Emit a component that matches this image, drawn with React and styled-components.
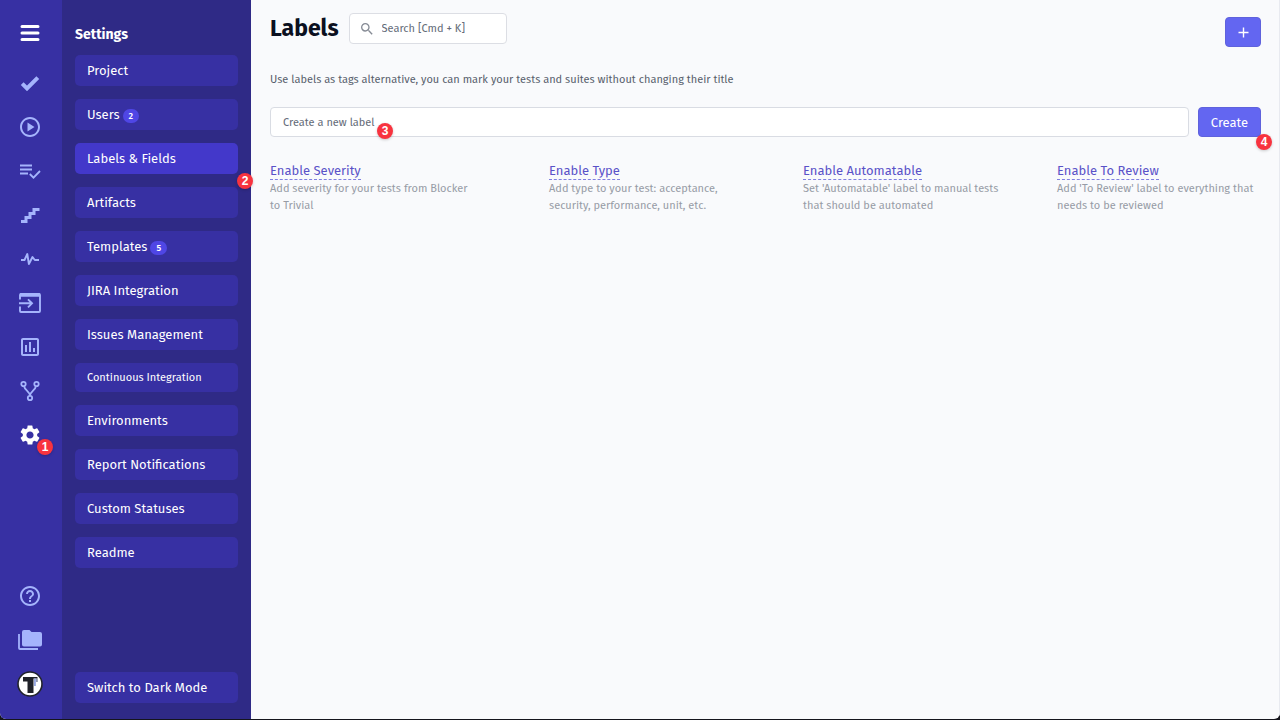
import styled, { createGlobalStyle } from "styled-components"
import {
  MdOutlinePlayCircle,
  MdHelpOutline,
  MdSettings,
  MdOutlineAssessment,
  MdSearch,
} from "react-icons/md"

const GlobalStyle = createGlobalStyle`
    * {
        box-sizing: border-box;
    }
    body {
        margin: 0;
        background-color: #15151c;
        font-family: "Fira Sans", "Noto Sans", sans-serif;
        font-size: 13px;
        color: #111827;
    }
    button, input {
        font-family: inherit;
    }
`

const Page = styled.div`
    display: flex;
    height: calc(100vh - 1px);
    overflow: hidden;
    border-radius: 0 0 6px 6px;
    background-color: #f9fafc;
`
const Rail = styled.nav`
    display: flex;
    flex-direction: column;
    align-items: center;
    width: 62px;
    flex-shrink: 0;
    padding: 18px 2px 20px 0;
    background-color: #3730a3;
`
const RailLink = styled.a`
    position: relative;
    display: flex;
    align-items: center;
    justify-content: center;
    width: 30px;
    height: 30px;
    margin-bottom: ${props => (props.$last ? "0" : "14px")};
    color: ${props => (props.$active ? "white" : "#a5b4fc")};
`
const MenuButton = styled.button`
    display: flex;
    align-items: center;
    justify-content: center;
    width: 30px;
    height: 30px;
    margin-bottom: 20px;
    padding: 0;
    border: none;
    background: none;
    color: white;
    cursor: pointer;
`
const RailBottom = styled.div`
    margin-top: auto;
`

const Side = styled.aside`
    position: relative;
    display: flex;
    flex-direction: column;
    width: 189px;
    flex-shrink: 0;
    padding: 25px 13px 16px;
    background-color: #2f2a86;
`
const SideTitle = styled.h2`
    margin: 0 0 10px;
    font-size: 14px;
    line-height: 20px;
    font-weight: 700;
    color: white;
`
const SideList = styled.div`
    display: flex;
    flex-direction: column;
    gap: 13px;
`
const SideLink = styled.a`
    display: flex;
    align-items: center;
    gap: 3px;
    height: ${props => (props.$small ? "29px" : "31px")};
    padding: 0 12px;
    border-radius: 5px;
    background-color: ${props => (props.$active ? "#4338ca" : "#3730a3")};
    font-size: ${props => (props.$small ? "11px" : "13px")};
    color: white;
    text-decoration: none;
    white-space: nowrap;
`
const Count = styled.span`
    padding: 0 6px;
    border-radius: 7px;
    background-color: #4f46e5;
    font-size: 9px;
    line-height: 14px;
    font-weight: 500;
    margin-top: 2px;
`
const ThemeButton = styled.button`
    height: 31px;
    margin-top: auto;
    padding: 0 12px;
    border: none;
    border-radius: 5px;
    background-color: #3730a3;
    font-size: 13px;
    text-align: left;
    color: white;
    cursor: pointer;
`

const Main = styled.main`
    flex: 1;
    min-width: 0;
    padding: 13px 18px 0 19px;
    border-right: 1px solid #e8eaf0;
`
const Header = styled.header`
    display: flex;
    align-items: flex-start;
`
const Heading = styled.h1`
    margin: 0 10px 0 0;
    font-size: 23px;
    line-height: 31px;
    font-weight: 700;
    color: #0b1020;
`
const SearchBox = styled.label`
    display: flex;
    align-items: center;
    gap: 7px;
    width: 158px;
    height: 31px;
    padding: 0 9px;
    border: 1px solid #dcdee4;
    border-radius: 4px;
    background-color: white;
    color: #868b95;
`
const SearchInput = styled.input`
    min-width: 0;
    flex: 1;
    padding: 0;
    border: none;
    outline: none;
    background: none;
    font-size: 11px;
    &::placeholder {
        color: #646b78;
        opacity: 1;
    }
`
const PrimaryButton = styled.button`
    position: relative;
    display: flex;
    align-items: center;
    justify-content: center;
    width: ${props => (props.$square ? "36px" : "63px")};
    height: 30px;
    flex-shrink: 0;
    padding: 0;
    border: 1px solid #5f62dc;
    border-radius: 4px;
    background-color: #6366f1;
    font-size: 13px;
    color: white;
    cursor: pointer;
`
const AddSlot = styled.div`
    margin: 4px 0 0 auto;
`
const Intro = styled.p`
    margin: 24px 0 19px;
    font-size: 11px;
    line-height: 17px;
    color: #585f6c;
`
const CreateForm = styled.form`
    display: flex;
    gap: 9px;
`
const Field = styled.div`
    position: relative;
    flex: 1;
`
const LabelInput = styled.input`
    display: block;
    width: 100%;
    height: 30px;
    padding: 0 12px;
    border: 1px solid #d9dce3;
    border-radius: 4px;
    background-color: white;
    font-size: 11px;
    outline: none;
    &::placeholder {
        color: #646b78;
        opacity: 1;
    }
`
const Presets = styled.div`
    display: grid;
    grid-template-columns: 279fr 254fr 254fr 204fr;
    margin-top: 26px;
`
const PresetLink = styled.a`
    display: inline-block;
    border-bottom: 1px dashed #7f7fe0;
    font-size: 13px;
    line-height: 16px;
    color: #5a52c8;
    text-decoration: none;
`
const PresetText = styled.p`
    max-width: 204px;
    margin: 0;
    font-size: 11px;
    line-height: 17px;
    color: #979ca6;
`

// numbered step marker, pinned over its parent
const Marker = styled.span`
    position: absolute;
    left: ${props => props.$left};
    top: ${props => props.$top};
    z-index: 1;
    width: 16px;
    height: 16px;
    border-radius: 50%;
    background-color: #f8333f;
    box-shadow: 0 1px 3px rgba(0, 0, 0, 0.2);
    font-family: "Liberation Sans", sans-serif;
    font-size: 12px;
    line-height: 16px;
    font-weight: 700;
    text-align: center;
    color: white;
`

const MenuIcon = () => (
  <svg width="20" height="18" viewBox="0 0 20 18" stroke="currentColor" strokeWidth="3" strokeLinecap="round">
    <path d="M2 2.5h16M2 9h16M2 15.5h16" />
  </svg>
)

const CheckIcon = () => (
  <svg width="20" height="16" viewBox="0 0 20 16" fill="none" stroke="currentColor" strokeWidth="4">
    <path d="M2.2 8.6L7 13.400 17.800 2.600" />
  </svg>
)

const TasksIcon = () => (
  <svg width="22" height="16" viewBox="0 0 22 16" fill="none" stroke="currentColor" strokeWidth="1.8">
    <path d="M1 2.500h12M1 6.500h12M1 10.500h8M10.8 11l3.700 3.700L21 8" />
  </svg>
)

const StairsIcon = () => (
  <svg width="20" height="17" viewBox="0 0 20 17" fill="none" stroke="currentColor" strokeWidth="3">
    <path d="M1 14.500h5v-4h4v-4h4v-4h5.500" />
  </svg>
)

const PulseIcon = () => (
  <svg width="20" height="14" viewBox="0 0 20 14" fill="none" stroke="currentColor" strokeWidth="1.9" strokeLinejoin="round">
    <path d="M1 8h3.500L7.300 2l1.600 10L12.500 5l2.300 3H19" />
  </svg>
)

const ImportIcon = () => (
  <svg width="24" height="22" viewBox="0 0 24 22" fill="none" stroke="currentColor" strokeWidth="1.9">
    <path d="M2 7.500V3a1 1 0 0 1 1-1h18a1 1 0 0 1 1 1v16a1 1 0 0 1-1 1H3a1 1 0 0 1-1-1v-4.500M1 11.300h12.500M10 7.300l4 4-4 4" />
    <path d="M2 3h20" strokeWidth="3.5" />
  </svg>
)

const BranchIcon = () => (
  <svg width="20" height="22" viewBox="0 0 20 22" fill="none" stroke="currentColor" strokeWidth="1.8">
    <circle cx="3.5" cy="4" r="2.2" />
    <circle cx="16.5" cy="4" r="2.2" />
    <circle cx="10" cy="18" r="2.2" />
    <path d="M4 6.200c.6 4 5.700 5.200 6 9.500M16 6.200c-.6 4-5.700 5.200-6 9.500" />
  </svg>
)

const FoldersIcon = () => (
  <svg width="24" height="22" viewBox="0 0 24 22" fill="currentColor">
    <path d="M6 1h5.500l2 2H22a2 2 0 0 1 2 2v10.500a2 2 0 0 1-2 2H6a2 2 0 0 1-2-2V3a2 2 0 0 1 2-2z" />
    <path d="M1 5v14a1 1 0 0 0 1 1h18" fill="none" stroke="currentColor" strokeWidth="1.8" />
  </svg>
)

const BrandIcon = () => (
  <svg width="26" height="26" viewBox="0 0 26 26">
    <circle cx="13" cy="13" r="12" fill="white" stroke="#22242c" strokeWidth="1.6" />
    <path d="M6 6h14.500v1.500H16.500v14.500h-6v-11.500H6z" fill="#202229" />
    <path d="M17.200 7.500h1.500v7.500h-1.500z" fill="#7d93da" />
    <path d="M19.400 7.500h1.100v3.500h-1.100z" fill="#4a5578" />
  </svg>
)

const PlusIcon = () => (
  <svg width="11" height="11" viewBox="0 0 11 11" stroke="currentColor" strokeWidth="1.4">
    <path d="M5.500 .5v10M.5 5.500h10" />
  </svg>
)

const railItems = [
  { name: "Tests", icon: <CheckIcon /> },
  { name: "Runs", icon: <MdOutlinePlayCircle size={24} /> },
  { name: "Plans", icon: <TasksIcon /> },
  { name: "Steps", icon: <StairsIcon /> },
  { name: "Pulse", icon: <PulseIcon /> },
  { name: "Imports", icon: <ImportIcon /> },
  { name: "Analytics", icon: <MdOutlineAssessment size={24} /> },
  { name: "Branches", icon: <BranchIcon /> },
  { name: "Settings", icon: <MdSettings size={24} />, active: true, marker: 1 },
]

const sideItems = [
  { title: "Project" },
  { title: "Users", count: 2 },
  { title: "Labels & Fields", active: true },
  { title: "Artifacts" },
  { title: "Templates", count: 5 },
  { title: "JIRA Integration" },
  { title: "Issues Management" },
  { title: "Continuous Integration", small: true },
  { title: "Environments" },
  { title: "Report Notifications" },
  { title: "Custom Statuses" },
  { title: "Readme" },
]

const presets = [
  { title: "Enable Severity", text: "Add severity for your tests from Blocker to Trivial" },
  { title: "Enable Type", text: "Add type to your test: acceptance, security, performance, unit, etc." },
  { title: "Enable Automatable", text: "Set 'Automatable' label to manual tests that should be automated" },
  { title: "Enable To Review", text: "Add 'To Review' label to everything that needs to be reviewed" },
]

function App() {
  return (
    <>
      <GlobalStyle />
      <Page>
        <Rail>
          <MenuButton aria-label="Menu"><MenuIcon /></MenuButton>
          {railItems.map(item => (
            <RailLink key={item.name} href="#" aria-label={item.name} $active={item.active}>
              {item.icon}
              {item.marker && <Marker $left="22px" $top="19px">{item.marker}</Marker>}
            </RailLink>
          ))}
          <RailBottom>
            <RailLink href="#" aria-label="Help"><MdHelpOutline size={24} /></RailLink>
            <RailLink href="#" aria-label="Projects"><FoldersIcon /></RailLink>
            <RailLink href="#" aria-label="Account" $last><BrandIcon /></RailLink>
          </RailBottom>
        </Rail>

        <Side>
          <SideTitle>Settings</SideTitle>
          <SideList>
            {sideItems.map(item => (
              <SideLink key={item.title} href="#" $active={item.active} $small={item.small}>
                {item.title}
                {item.count && <Count>{item.count}</Count>}
              </SideLink>
            ))}
          </SideList>
          <ThemeButton>Switch to Dark Mode</ThemeButton>
          <Marker $left="175px" $top="173px">2</Marker>
        </Side>

        <Main>
          <Header>
            <Heading>Labels</Heading>
            <SearchBox>
              <MdSearch size={16} />
              <SearchInput aria-label="Search" placeholder="Search [Cmd + K]" />
            </SearchBox>
            <AddSlot>
              <PrimaryButton $square aria-label="Add"><PlusIcon /></PrimaryButton>
            </AddSlot>
          </Header>
          <Intro>
            Use labels as tags alternative, you can mark your tests and suites without changing their title
          </Intro>
          <CreateForm onSubmit={e => e.preventDefault()}>
            <Field>
              <LabelInput aria-label="Create a new label" placeholder="Create a new label" />
              <Marker $left="107px" $top="16px">3</Marker>
            </Field>
            <PrimaryButton type="submit">
              Create
              <Marker $left="57px" $top="26px">4</Marker>
            </PrimaryButton>
          </CreateForm>
          <Presets>
            {presets.map(preset => (
              <div key={preset.title}>
                <PresetLink href="#">{preset.title}</PresetLink>
                <PresetText>{preset.text}</PresetText>
              </div>
            ))}
          </Presets>
        </Main>
      </Page>
    </>
  )
}

export default App
